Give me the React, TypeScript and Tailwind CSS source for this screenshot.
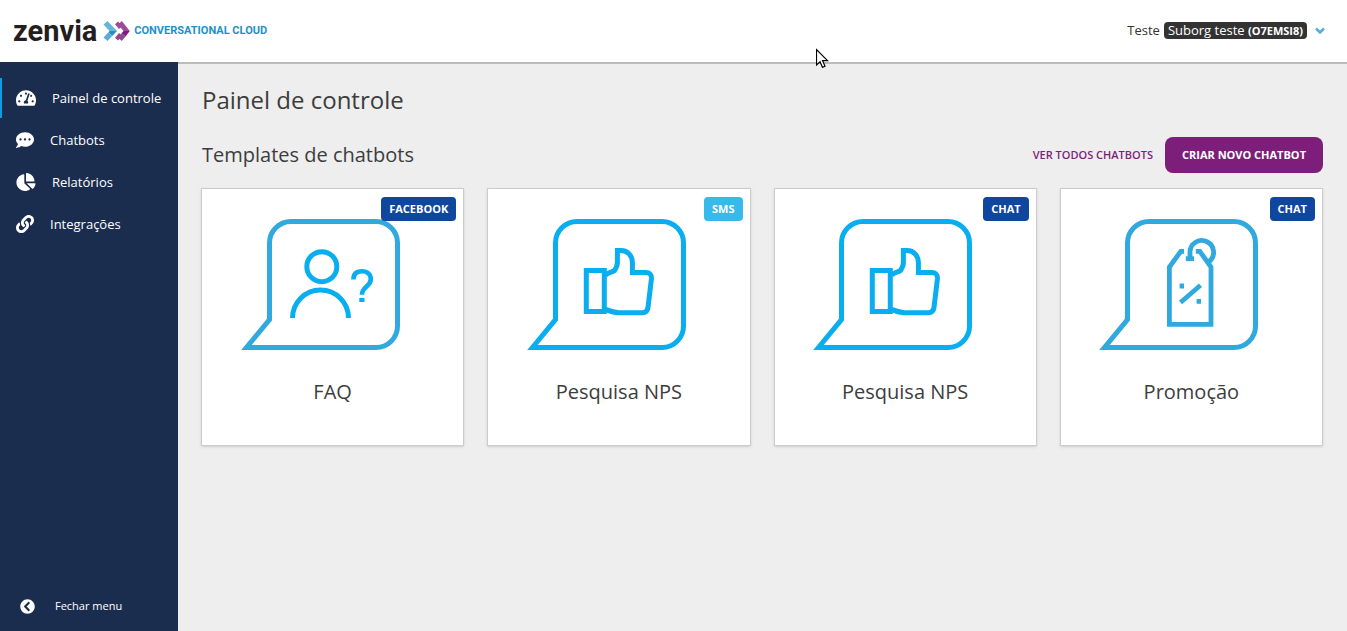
import type { ReactNode } from "react";
import type { IconType } from "react-icons";
import { FaChartPie, FaChevronCircleLeft, FaCommentDots, FaLink, FaTachometerAlt } from "react-icons/fa";

type NavItem = { label: string; Icon: IconType; iconClass: string; active?: boolean };

const navItems: NavItem[] = [
  { label: "Painel de controle", Icon: FaTachometerAlt, iconClass: "h-[18px] w-5", active: true },
  { label: "Chatbots", Icon: FaCommentDots, iconClass: "h-[18px] w-[18px]" },
  { label: "Relatórios", Icon: FaChartPie, iconClass: "h-[18px] w-5" },
  { label: "Integrações", Icon: FaLink, iconClass: "h-[18px] w-[18px]" },
];

function Bubble({ color, children }: { color: string; children: ReactNode }) {
  return (
    <svg
      viewBox="0 0 200 150"
      className="h-[150px] w-[200px]"
      fill="none"
      stroke={color}
      strokeWidth="5"
      aria-hidden="true"
    >
      <path d="M36.5 109.5V33A21.5 21.5 0 0 1 58 11.5H143A21.5 21.5 0 0 1 164.5 33V116A21.5 21.5 0 0 1 143 137.5H13.5Z" />
      {children}
    </svg>
  );
}

function FaqArt() {
  return (
    <Bubble color="#31a9df">
      <g stroke="#08aeef">
        <circle cx="88.8" cy="56.7" r="15" />
        <path d="M59.5 108a28 28 0 0 1 56 0" />
        <path
          strokeWidth="4.6"
          d="M120.4 69.6C120.4 64 123.6 61.2 128.9 61.2C134.4 61.2 137.8 64.4 137.8 69.2C137.8 76.5 128.9 76.5 128.9 84.8"
        />
        <path strokeWidth="5.2" d="M128.9 87.9V92" />
      </g>
    </Bubble>
  );
}

function ThumbArt() {
  return (
    <Bubble color="#08aeef">
      <path d="M67.3 60.5H85.3V101.5H67.3Z" />
      <path d="M86.5 65C90 62 92.5 62.5 95.3 60.7C96.5 59 98.4 56 98.4 52.5V40.5H102C109 40.5 113.4 46 113.4 52.5V62.5H126.5Q133 62.5 132.4 69L129 97.5Q128.2 102.7 123.4 102.7H100C94 102.7 90.5 101 86.5 99.3" />
    </Bubble>
  );
}

function TagArt() {
  return (
    <Bubble color="#31a9df">
      <g strokeWidth="4.8">
        <path d="M93.1 41.3H89.8L78.4 57V114.3H120V57L108.8 41.3H104.8" />
        <path d="M99 48V42.3A11.8 11.8 0 1 1 118 51.7" />
        <path d="M94.8 48.7H103" />
        <path d="M89.5 92.5L109.5 75.3" />
        <path d="M88.6 76H93M105.6 91.4H110" />
      </g>
    </Bubble>
  );
}

const templates = [
  { title: "FAQ", channel: "FACEBOOK", badge: "bg-[#0f479f]", art: <FaqArt /> },
  { title: "Pesquisa NPS", channel: "SMS", badge: "bg-[#38b9eb]", art: <ThumbArt /> },
  { title: "Pesquisa NPS", channel: "CHAT", badge: "bg-[#0f479f]", art: <ThumbArt /> },
  { title: "Promoção", channel: "CHAT", badge: "bg-[#0f479f]", art: <TagArt /> },
];

function Header() {
  return (
    <header className="flex h-[62px] items-center justify-between bg-white pr-[22px] pl-[13px]">
      <a href="#inicio" className="flex items-center font-['Roboto','Open_Sans',sans-serif] font-bold">
        <span className="text-[29px] leading-8 text-[#231f20]">zenvia</span>
        <svg viewBox="0 0 27 22" className="ml-1.5 h-[22px] w-[27px]" aria-hidden="true">
          <path fill="#66b5d8" d="M0.5 4.5L4.5 1L14 11H6.5Z" />
          <path fill="#2f8dbd" d="M6.5 11H14L9.2 16L5.500 12.200Z" />
          <path fill="#5aaed6" d="M5.500 12.200L9.2 16L4.5 21L0.5 17.500Z" />
          <path fill="#9c4b99" d="M15 4.5L18.8 1L26.8 11H20.5Z" />
          <path fill="#7d1f7a" d="M20.5 11H26.8L22.5 16.5L18.500 13.2Z" />
          <path fill="#94468f" d="M18.500 13.2L22.5 16.5L18.8 21L15 17.5Z" />
          <path fill="#9c4b99" d="M12 4.200L15 1.500L19.500 6L16 9Z" />
          <path fill="#94468f" d="M12 17.800L15 20.500L19.500 16L16 13Z" />
        </svg>
        <span className="ml-1 text-[11px] leading-4 text-[#1d8fcb]">CONVERSATIONAL CLOUD</span>
      </a>
      <button type="button" className="flex items-center pb-0.5 text-[13px] leading-4 text-[#333]">
        <span>Teste</span>
        <span className="ml-1 rounded bg-[#333] px-1 text-white">
          Suborg teste <b className="text-[11px]">(O7EMSI8)</b>
        </span>
        <svg
          viewBox="0 0 10 8"
          className="mt-0.5 ml-2 h-2 w-2.5"
          fill="none"
          stroke="#55aedd"
          strokeWidth="2.6"
          aria-hidden="true"
        >
          <path d="M1 1.5L5 5.5L9 1.5" />
        </svg>
      </button>
    </header>
  );
}

function Sidebar() {
  return (
    <aside className="flex w-[178px] shrink-0 flex-col justify-between bg-[#1b2d4f] text-white">
      <nav className="flex flex-col gap-0.5 pt-4">
        {navItems.map(({ label, Icon, iconClass, active }) => (
          <a
            key={label}
            href="#menu"
            aria-current={active ? "page" : undefined}
            className={`flex h-10 items-center gap-4 border-l-2 pl-3.5 text-[13px] whitespace-nowrap ${
              active ? "border-[#0a9fe0]" : "border-transparent"
            }`}
          >
            <Icon className={iconClass} aria-hidden="true" />
            <span className="pt-0.5">{label}</span>
          </a>
        ))}
      </nav>
      <button type="button" className="flex h-[50px] items-center gap-5 pl-5 text-[11px]">
        <FaChevronCircleLeft className="h-[15px] w-[15px]" aria-hidden="true" />
        Fechar menu
      </button>
    </aside>
  );
}

function Cursor() {
  return (
    <svg
      viewBox="0 0 13 20"
      className="pointer-events-none absolute top-12 left-[816px] h-5 w-[13px]"
      aria-hidden="true"
    >
      <path
        d="M0.5 1.5V17L4 13.7L6.5 19.3L9 18.2L6.6 12.7H11.5Z"
        fill="#fff"
        stroke="#000"
        strokeWidth="1.2"
      />
    </svg>
  );
}

export default function App() {
  return (
    <div className="relative flex min-h-screen flex-col bg-[#eee] font-['Open_Sans',sans-serif]">
      <Header />
      <div className="flex grow">
        <Sidebar />
        <main className="min-w-0 grow border-t-2 border-[#bbb] pt-5 pr-6 pb-6 pl-[23px] text-[#3d3d3d]">
          <h1 className="pl-px text-2xl leading-8">Painel de controle</h1>
          <div className="mt-[21px] flex h-9 items-center justify-between pl-px">
            <h2 className="text-xl">Templates de chatbots</h2>
            <div className="flex items-center gap-3 text-[11px]">
              <a href="#chatbots" className="font-semibold text-[#7d1f7a]">
                VER TODOS CHATBOTS
              </a>
              <button type="button" className="h-9 rounded-lg bg-[#7d1f7a] px-[17px] font-bold text-white">
                CRIAR NOVO CHATBOT
              </button>
            </div>
          </div>
          <div className="mt-[15px] grid grid-cols-4 gap-[23px]">
            {templates.map((t, i) => (
              <article
                key={i}
                className="relative flex flex-col items-center border border-[#ccc] bg-white pt-[21px] pb-[39px] shadow-sm"
              >
                {t.art}
                <h3 className="mt-[18px] text-xl leading-7">{t.title}</h3>
                <span
                  className={`absolute top-2 right-[7px] rounded px-2 text-[11px] leading-6 font-bold text-white ${t.badge}`}
                >
                  {t.channel}
                </span>
              </article>
            ))}
          </div>
        </main>
      </div>
      <Cursor />
    </div>
  );
}
